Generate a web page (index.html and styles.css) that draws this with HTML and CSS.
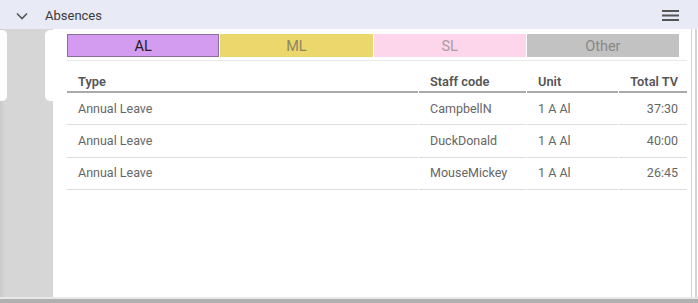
FILE: index.html
```html
<!DOCTYPE html>
<html lang="en">
<head>
  <meta charset="UTF-8">
  <title>Absences</title>
  <link rel="stylesheet" href="styles.css">
</head>
<body>
<div class="widget">
  <div class="header">
    <svg class="chevron" width="12" height="8" viewBox="0 0 12 8">
      <path d="M1 1.5 L6 6.5 L11 1.5" fill="none" stroke="#555" stroke-width="1.6"/>
    </svg>
    <span class="title">Absences</span>
    <svg class="menu" width="17" height="11" viewBox="0 0 17 11">
      <rect x="0" y="0" width="17" height="2" fill="#555"/>
      <rect x="0" y="4.5" width="17" height="2" fill="#555"/>
      <rect x="0" y="9" width="17" height="2" fill="#555"/>
    </svg>
  </div>

  <div class="body">
    <div class="sidebar">
      <div class="stubs">
        <div class="stub stub-left"></div>
        <div class="stub stub-right"></div>
      </div>
    </div>

    <div class="panel">
      <div class="tabbar">
        <div class="tabs">
          <div class="tab tab-al">AL</div>
          <div class="tab tab-ml">ML</div>
          <div class="tab tab-sl">SL</div>
          <div class="tab tab-other">Other</div>
        </div>
      </div>

      <table class="grid">
        <thead>
          <tr>
            <th class="col-type">Type</th>
            <th class="col-staff">Staff code</th>
            <th class="col-unit">Unit</th>
            <th class="col-tv num">Total TV</th>
          </tr>
        </thead>
        <tbody>
          <tr>
            <td>Annual Leave</td>
            <td>CampbellN</td>
            <td>1 A Al</td>
            <td class="num">37:30</td>
          </tr>
          <tr>
            <td>Annual Leave</td>
            <td>DuckDonald</td>
            <td>1 A Al</td>
            <td class="num">40:00</td>
          </tr>
          <tr>
            <td>Annual Leave</td>
            <td>MouseMickey</td>
            <td>1 A Al</td>
            <td class="num">26:45</td>
          </tr>
        </tbody>
      </table>
    </div>

    <div class="edge"></div>
  </div>

  <div class="footer"></div>
</div>
</body>
</html>
```

FILE: styles.css
```css
* { box-sizing: border-box; }
body {
  margin: 0;
  font-family: Roboto, "Liberation Sans", sans-serif;
  background-color: #fff;
}
.widget {
  width: 698px;
  height: 303px;
  display: flex;
  flex-direction: column;
  overflow: hidden;
}
.header {
  height: 29px;
  background-color: #e8eaf6;
  display: flex;
  align-items: center;
  padding: 2px 19px 0 16px;
}
.chevron {
  margin-top: 1px;
}
.title {
  margin-left: 17px;
  font-size: 13px;
  color: #3a3a3a;
  flex: 1;
}
.menu {
  margin-top: -1px;
}
.body {
  flex: 1;
  display: flex;
}
.sidebar {
  width: 53px;
  flex: none;
  background: linear-gradient(to right, #c8c8c8 0, #d6d6d6 5px, #d6d6d6 100%);
  padding-top: 1px;
}
.stubs {
  height: 71px;
  display: flex;
  justify-content: space-between;
}
.stub {
  background-color: #fff;
}
.stub-left {
  width: 7px;
  border-radius: 0 5px 5px 0;
}
.stub-right {
  width: 8px;
  border-radius: 5px 0 0 5px;
}
.panel {
  flex: 1;
  min-width: 0;
  background-color: #fff;
  border-right: 1px solid #d2d2d2;
  padding: 5px 4px 0 13px;
}
.edge {
  width: 5px;
  flex: none;
  background-color: #fff;
  border-right: 2px solid #d4d4d4;
  margin-right: 1px;
}
.footer {
  height: 6px;
  border-top: 2px solid #e8e8e8;
  background-color: #b0b0b0;
}
.tabbar {
  margin-left: 1px;
  padding-bottom: 3px;
  border-bottom: 1px solid #e8e8e8;
}
.tabs {
  width: 612px;
  display: grid;
  grid-template-columns: repeat(4, 1fr);
  gap: 1px;
}
.tab {
  height: 23px;
  padding-top: 1px;
  line-height: 22px;
  text-align: center;
  font-size: 14.5px;
  border: 1px solid transparent;
}
.tab-al {
  background-color: #d39cf0;
  border-color: #8c6d9c;
  color: #222;
}
.tab-ml {
  background-color: #ebd76b;
  color: #8d8660;
}
.tab-sl {
  background-color: #fed6eb;
  color: #a99ca4;
}
.tab-other {
  background-color: #c2c2c2;
  color: #888;
}
.grid {
  width: 622px;
  table-layout: fixed;
  border-collapse: separate;
  border-spacing: 1px 0;
  font-size: 12.5px;
}
.grid th {
  height: 32px;
  vertical-align: bottom;
  text-align: left;
  white-space: nowrap;
  font-weight: 600;
  font-size: 12.8px;
  color: #555;
  padding: 0 10px 2px 11px;
  border-bottom: 2px solid #aaa;
}
.grid td {
  height: 32.3px;
  white-space: nowrap;
  color: #666;
  padding: 0 10px 1px 11px;
  border-bottom: 1px solid #ddd;
}
.grid .num {
  text-align: right;
  padding-right: 9px;
}
.col-type { width: 351px; }
.col-staff { width: 107px; }
.col-unit { width: 91px; }
```
